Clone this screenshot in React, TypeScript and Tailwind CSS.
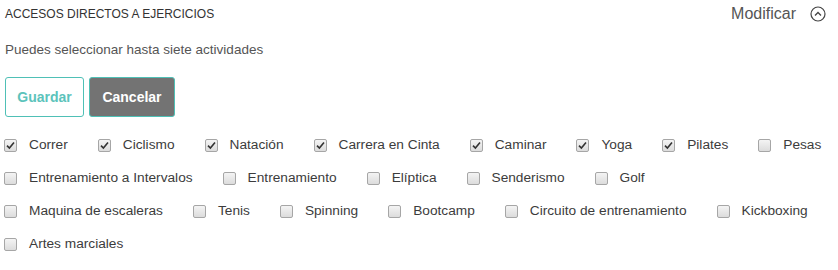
import React from "react"

const rows: { label: string; checked?: boolean }[][] = [
  [
    { label: "Correr", checked: true },
    { label: "Ciclismo", checked: true },
    { label: "Natación", checked: true },
    { label: "Carrera en Cinta", checked: true },
    { label: "Caminar", checked: true },
    { label: "Yoga", checked: true },
    { label: "Pilates", checked: true },
    { label: "Pesas" },
  ],
  [
    { label: "Entrenamiento a Intervalos" },
    { label: "Entrenamiento" },
    { label: "Elíptica" },
    { label: "Senderismo" },
    { label: "Golf" },
  ],
  [
    { label: "Maquina de escaleras" },
    { label: "Tenis" },
    { label: "Spinning" },
    { label: "Bootcamp" },
    { label: "Circuito de entrenamiento" },
    { label: "Kickboxing" },
  ],
  [{ label: "Artes marciales" }],
]

function Box({ checked }: { checked?: boolean }) {
  return (
    <span className="w-[13px] h-[13px] shrink-0 rounded-[2px] border border-[#a6a6a6] bg-gradient-to-b from-[#f4f4f4] to-[#dcdcdc] flex items-center justify-center">
      {checked && (
        <svg width="9" height="9" viewBox="0 0 9 9">
          <path d="M1 4.6 L3.4 7 L8 1.6" fill="none" stroke="#333" strokeWidth="1.6" />
        </svg>
      )}
    </span>
  )
}

export default function App() {
  return (
    <div className="w-[838px] h-[270px] bg-white text-[#3c3c3c] font-['Liberation_Sans',Arial,sans-serif] px-[4px]">
      <header className="flex items-center justify-between h-[28px] pl-px">
        <h2 className="text-[12px] text-[#333]">ACCESOS DIRECTOS A EJERCICIOS</h2>
        <button className="flex items-center gap-[14px] text-[16px] text-[#555] pr-[8px]">
          Modificar
          <svg width="16" height="16" viewBox="0 0 16 16">
            <circle cx="8" cy="8" r="7" fill="none" stroke="#444" strokeWidth="1.2" />
            <path d="M5 9.5 L8 6.5 L11 9.5" fill="none" stroke="#444" strokeWidth="1.3" />
          </svg>
        </button>
      </header>

      <p className="mt-[12px] pl-px text-[13.5px] text-[#555]">Puedes seleccionar hasta siete actividades</p>

      <div className="mt-[17px] pl-px flex gap-[5px]">
        <button className="w-[79px] h-[40px] rounded-[3px] border border-[#4fc0b6] bg-white text-[14px] font-bold text-[#5cc3bb]">
          Guardar
        </button>
        <button className="w-[86px] h-[40px] rounded-[3px] border border-[#4fc0b6] bg-[#737373] text-[14px] font-bold text-white">
          Cancelar
        </button>
      </div>

      <div className="mt-[12px] flex flex-col">
        {rows.map((row, i) => (
          <div key={i} className="flex items-center h-[33px]">
            {row.map((it) => (
              <label
                key={it.label}
                className="flex shrink-0 items-center gap-[12px] mr-[30px] text-[13.7px] whitespace-nowrap"
              >
                <Box checked={it.checked} />
                {it.label}
              </label>
            ))}
          </div>
        ))}
      </div>
    </div>
  )
}
